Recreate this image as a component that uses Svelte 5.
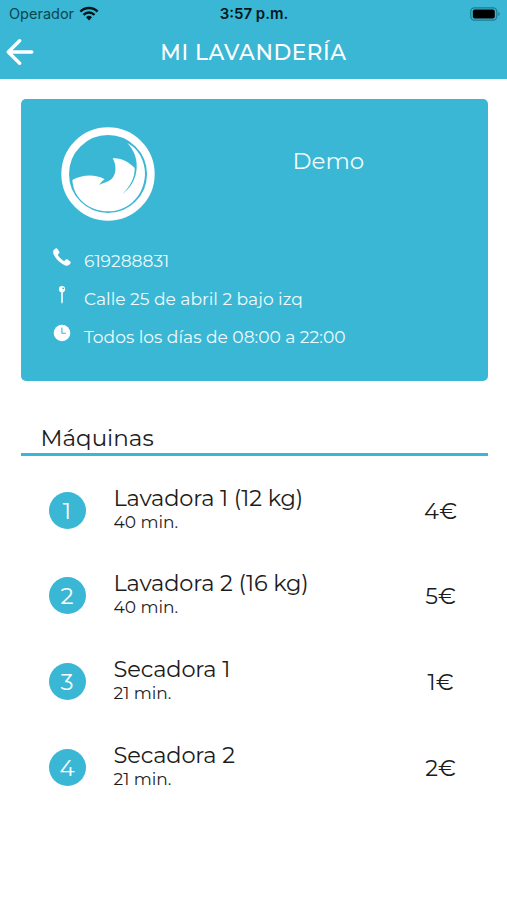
<script lang="ts">
	const machines = [
		{ id: 1, name: 'Lavadora 1 (12 kg)', time: '40 min.', price: '4€' },
		{ id: 2, name: 'Lavadora 2 (16 kg)', time: '40 min.', price: '5€' },
		{ id: 3, name: 'Secadora 1', time: '21 min.', price: '1€' },
		{ id: 4, name: 'Secadora 2', time: '21 min.', price: '2€' }
	];
</script>

<div class="screen">
	<header>
		<div class="status">
			<div class="carrier">
				<span>Operador</span>
				<svg width="20" height="15" viewBox="0 0 20 15" fill="none" stroke="#04171c">
					<path d="M1.4 5.6a12 12 0 0 1 17.2 0" stroke-width="2.5" />
					<path d="M4.5 8.8a7.7 7.7 0 0 1 11 0" stroke-width="2.4" />
					<path d="M7 11.2a4.3 4.3 0 0 1 6 0L10 14.4z" fill="#04171c" stroke="none" />
				</svg>
			</div>
			<div class="clock">3:57 p.m.</div>
			<svg class="battery" width="31" height="14" viewBox="0 0 31 14">
				<rect x=".8" y=".8" width="26" height="12.4" rx="3.6" fill="none" stroke="#1c7c90" stroke-width="1.2" />
				<rect x="2.8" y="2.6" width="22" height="8.8" rx="2" fill="#000" />
				<path d="M28.3 5c1.9.7 1.9 3.5 0 4.2z" fill="#1c7c90" />
			</svg>
		</div>
		<nav>
			<svg class="back" width="28" height="26" viewBox="0 0 28 26" fill="none" stroke="#fff" stroke-width="3.4">
				<path d="M13.6 1.8 2.3 13l11.3 11.2M2.3 13h23.5" stroke-linejoin="round" stroke-linecap="round" />
			</svg>
			<h1>MI LAVANDERÍA</h1>
		</nav>
	</header>

	<section class="card">
		<div class="brand">
			<svg class="logo" width="94" height="94" viewBox="32 35 282 282">
				<circle cx="173" cy="176" r="128.5" fill="none" stroke="#fff" stroke-width="23" />
				<path
					fill="#fff"
					d="M66 194C94 178 134 175 163 192C158 195 151 202 147 209C162 202 179 199 188 186C200 168 196 145 187 129C211 126 239 142 253 158C254 187 239 215 215 237C242 217 257 190 259 158C261 126 249 103 231 83C262 97 285 136 284 178C281 240 235 288 174 288C116 288 69 249 66 194z" />
			</svg>
			<div class="demo">Demo</div>
		</div>
		<ul>
			<li>
				<svg width="18" height="18" viewBox="0 0 18 18" fill="#fff">
					<path d="M.2 3.3C.7 1.5 2.2.2 3.5.2c.7 0 3 3.4 3 4.2 0 1-1.5 1.5-1.6 2.3-.1 1.3 5 6.3 6.2 6.2.9-.1 1.4-1.8 2.5-1.7.8 0 4.1 2.2 4.1 3 0 1.5-1.8 3.4-3.6 3.5C9.5 18-.6 8.5.2 3.3z" />
				</svg>
				<span class="phone">619288831</span>
			</li>
			<li>
				<svg width="18" height="18" viewBox="0 0 18 18">
					<circle cx="9" cy="3.2" r="3.1" fill="#fff" />
					<circle cx="10.2" cy="2.3" r=".9" fill="#3ab7d5" />
					<path d="M8.2 6h1.6v10l-.8 2-.8-2z" fill="#fff" />
				</svg>
				<span class="address">Calle 25 de abril 2 bajo izq</span>
			</li>
			<li>
				<svg width="18" height="18" viewBox="0 0 18 18" fill="none">
					<circle cx="9" cy="9" r="8.3" fill="#fff" />
					<path d="M8.9 3.6v5.6h3.9" stroke="#3ab7d5" stroke-width="1.1" />
				</svg>
				<span class="hours">Todos los días de 08:00 a 22:00</span>
			</li>
		</ul>
	</section>

	<section class="machines">
		<h2>Máquinas</h2>
		{#each machines as machine}
			<div class="row">
				<div class="badge">{machine.id}</div>
				<div class="info">
					<div class="name">{machine.name}</div>
					<div class="time">{machine.time}</div>
				</div>
				<div class="price">{machine.price}</div>
			</div>
		{/each}
	</section>
</div>

<style>
	:global(body) {
		margin: 0;
		background: #fff;
	}
	.screen {
		--blue: #3ab7d5;
		height: 900px;
		overflow: hidden;
		background: #fff;
		color: #1c1c1c;
		font-family: Montserrat, Inter, sans-serif;
	}
	svg {
		display: block;
		flex: none;
	}
	header {
		height: 79px;
		background: var(--blue);
	}
	.status {
		display: grid;
		grid-template-columns: 1fr auto 1fr;
		align-items: center;
		height: 27px;
		padding: 0 6px 0 9px;
		color: #04171c;
		font: 15px/27px Inter, sans-serif;
	}
	.carrier {
		display: flex;
		align-items: center;
		gap: 5px;
		color: #0c4650;
		font-size: 14.5px;
	}
	.clock {
		padding-right: 2px;
		font-weight: 600;
	}
	.battery {
		justify-self: end;
	}
	nav {
		display: grid;
		grid-template-columns: 28px 1fr 28px;
		align-items: center;
		height: 50px;
		padding: 0 6px;
	}
	h1 {
		margin: 0;
		color: #fff;
		font-size: 21.5px;
		font-weight: 500;
		line-height: 50px;
		text-align: center;
		letter-spacing: 0.6px;
	}
	.card {
		box-sizing: border-box;
		height: 282px;
		margin: 19.5px 19.5px 0 20.5px;
		padding: 28px 0 0 32px;
		border-radius: 5px;
		background: var(--blue);
		color: #f0fbfd;
	}
	.brand {
		display: flex;
		height: 94px;
		padding-left: 8px;
	}
	.demo {
		margin-left: 138px;
		padding-top: 18px;
		font-size: 23px;
		line-height: 32px;
	}
	ul {
		margin: 21px 0 0;
		padding: 0;
		list-style: none;
	}
	li {
		display: flex;
		gap: 13.5px;
		height: 38px;
		font-size: 17.1px;
		line-height: 38px;
		white-space: nowrap;
	}
	li svg {
		margin-top: 6px;
	}
	.machines {
		margin: 43px 19.5px 0 20.5px;
	}
	h2 {
		margin: 0 0 12px;
		padding-left: 20px;
		border-bottom: 3px solid var(--blue);
		font-size: 23px;
		font-weight: 400;
		line-height: 29px;
	}
	.row {
		display: flex;
		align-items: center;
		height: 85.6px;
		padding-left: 28px;
	}
	.badge {
		width: 37px;
		height: 37px;
		border-radius: 50%;
		background: var(--blue);
		color: #fff;
		font-size: 23px;
		line-height: 38px;
		text-align: center;
	}
	.info {
		flex: 1;
		padding: 0 0 2px 28px;
	}
	.name {
		font-size: 22.5px;
		line-height: 25px;
		letter-spacing: -0.15px;
	}
	.time {
		font-size: 17px;
		line-height: 22px;
	}
	.price {
		width: 94px;
		padding-top: 1px;
		font-size: 22.5px;
		text-align: center;
	}
</style>
